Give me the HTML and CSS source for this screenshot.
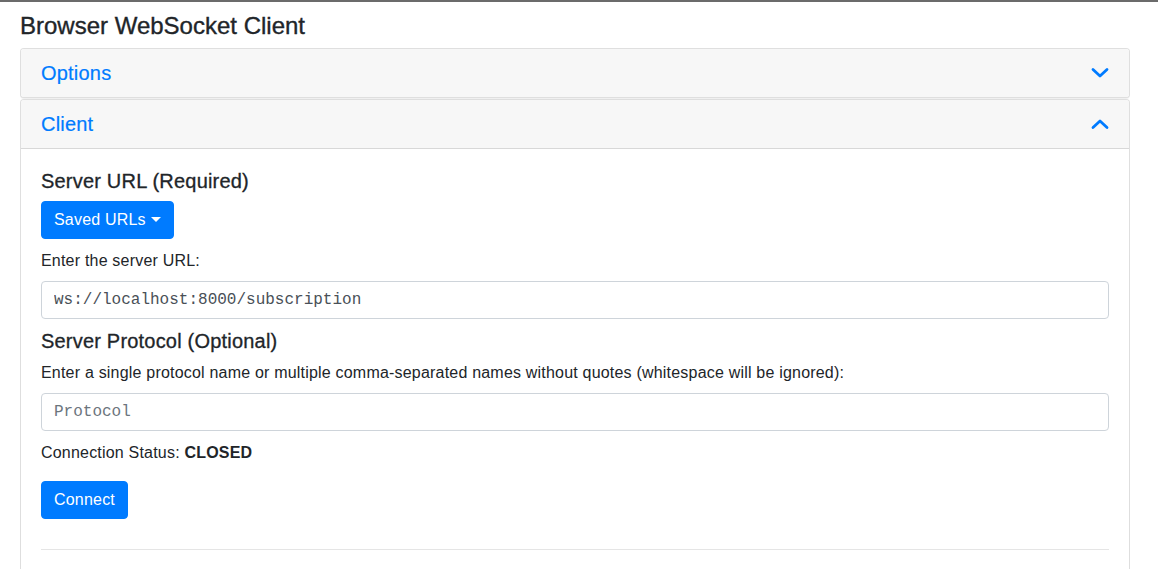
FILE: index.html
```html
<!DOCTYPE html>
<html lang="en">
<head>
<meta charset="utf-8">
<title>Browser WebSocket Client</title>
<link rel="stylesheet" href="styles.css">
</head>
<body>
<div class="topline"></div>
<main class="container">
  <h1 class="title">Browser WebSocket Client</h1>
  <section class="card card-options">
    <div class="card-header">
      <span class="card-title">Options</span>
      <svg class="chev" width="18" height="12" viewBox="0 0 18 12"><path d="M2 2.5 L9 9 L16 2.5" fill="none" stroke="#007bff" stroke-width="2.8" stroke-linecap="round" stroke-linejoin="round"/></svg>
    </div>
  </section>
  <section class="card card-client">
    <div class="card-header">
      <span class="card-title">Client</span>
      <svg class="chev" width="18" height="12" viewBox="0 0 18 12"><path d="M2 9.5 L9 3 L16 9.5" fill="none" stroke="#007bff" stroke-width="2.8" stroke-linecap="round" stroke-linejoin="round"/></svg>
    </div>
    <div class="card-body">
      <h2 class="section-title">Server URL (Required)</h2>
      <button class="btn btn-primary dropdown-toggle" type="button">Saved URLs</button>
      <label class="field-label" for="url">Enter the server URL:</label>
      <input class="form-control" id="url" type="text" value="ws://localhost:8000/subscription">
      <h2 class="section-title mt">Server Protocol (Optional)</h2>
      <label class="field-label" for="proto">Enter a single protocol name or multiple comma-separated names without quotes (whitespace will be ignored):</label>
      <input class="form-control" id="proto" type="text" placeholder="Protocol">
      <p class="status">Connection Status: <strong>CLOSED</strong></p>
      <button class="btn btn-primary" type="button">Connect</button>
      <hr class="divider">
    </div>
  </section>
</main>
</body>
</html>
```

FILE: styles.css
```css
* { box-sizing: border-box; }
html, body { margin: 0; padding: 0; }
body {
  font-family: "Liberation Sans", Arial, sans-serif;
  color: #212529;
  background: #fff;
  font-size: 16px;
  line-height: 1.5;
  letter-spacing: 0.2px;
}
.topline {
  height: 2px;
  background: #6b6b6b;
}
.container {
  padding: 0 20px;
  width: 1150px;
}
.title {
  font-size: 24px;
  font-weight: 400;
  line-height: 29px;
  margin: 9px 0 8px 0;
  letter-spacing: 0;
  -webkit-text-stroke: 0.35px #212529;
}
.card {
  border: 1px solid rgba(0,0,0,0.125);
  border-radius: 4px;
  background: #fff;
  width: 1110px;
}
.card-options {
  height: 50px;
  box-shadow: 0 1px 0 rgba(0,0,0,0.06);
}
.card-client {
  margin-top: 1px;
  border-bottom: none;
  border-bottom-left-radius: 0;
  border-bottom-right-radius: 0;
}
.card-header {
  display: flex;
  align-items: center;
  justify-content: space-between;
  background: #f7f7f7;
  padding: 12px 20px;
  height: 48px;
  border-radius: 3px 3px 0 0;
}
.card-options .card-header { border-radius: 3px; }
.card-client .card-header {
  height: 49px;
  border-bottom: 1px solid rgba(0,0,0,0.125);
}
.card-title {
  color: #007bff;
  font-size: 20px;
  line-height: 24px;
  -webkit-text-stroke: 0.2px #007bff;
}
.chev { display: block; }
.card-body {
  padding: 20px 20px 40px 20px;
  display: flex;
  flex-direction: column;
  align-items: flex-start;
}
.section-title {
  font-size: 20px;
  font-weight: 400;
  line-height: 24px;
  margin: 0 0 8px 0;
  -webkit-text-stroke: 0.3px #212529;
}
.section-title.mt { margin-top: 10px; }
.btn {
  font-family: inherit;
  font-size: 16px;
  line-height: 24px;
  letter-spacing: 0.2px;
  padding: 6px 12px;
  border: 1px solid transparent;
  border-radius: 4px;
  cursor: pointer;
}
.btn-primary {
  background: #007bff;
  border-color: #007bff;
  color: #fff;
}
.dropdown-toggle::after {
  content: "";
  display: inline-block;
  margin-left: 5px;
  vertical-align: 3px;
  border-top: 5px solid #fff;
  border-left: 5px solid transparent;
  border-right: 5px solid transparent;
}
.field-label {
  display: block;
  margin: 10px 0 8px 0;
  line-height: 24px;
}
.section-title + .field-label { margin-top: 0; }
.form-control {
  display: block;
  width: 100%;
  height: 38px;
  padding: 6px 12px;
  font-family: "Liberation Mono", "Courier New", monospace;
  font-size: 16px;
  letter-spacing: 0;
  color: #495057;
  border: 1px solid #ced4da;
  border-radius: 4px;
  background: #fff;
}
.form-control::placeholder { color: #6c757d; opacity: 1; }
.status {
  margin: 10px 0 16px 0;
  line-height: 24px;
}
.status strong { font-weight: 700; }
.divider {
  align-self: stretch;
  border: 0;
  border-top: 1px solid rgba(0,0,0,0.1);
  margin: 30px 0 0 0;
}
```
